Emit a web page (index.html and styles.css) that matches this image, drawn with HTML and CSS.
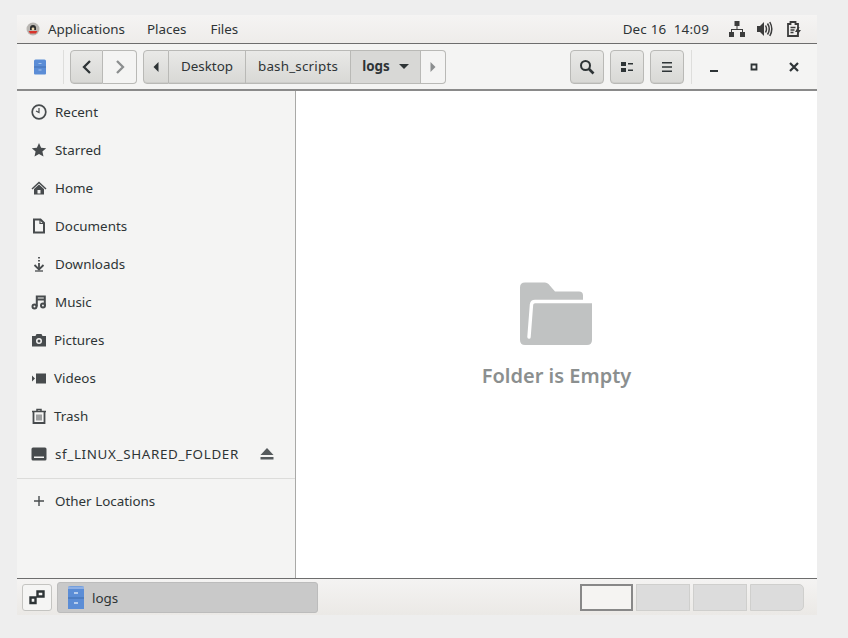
FILE: index.html
```html
<!DOCTYPE html>
<html lang="en">
<head>
    <meta charset="UTF-8">
    <title>logs</title>
    <link rel="stylesheet" href="styles.css">
</head>
<body>
<div class="desktop">
    <div class="top-panel">
        <svg class="distro" width="16" height="16" viewBox="0 0 16 16"><circle cx="8" cy="8" r="6.500" fill="#b9b6b2"/><path d="M5 7a3 3 0 0 1 6 0v2H5z" fill="#2e2e2e"/><path d="M3.500 10h9L11 12.500H5z" fill="#d8342c"/><circle cx="8" cy="8" r="1.400" fill="#f0d9b0"/></svg>
        <span class="menu menu-apps">Applications</span>
        <span class="menu menu-places">Places</span>
        <span class="menu">Files</span>
        <span class="clock">Dec 16&nbsp; 14:09</span>
        <svg class="tray tray-net" width="16" height="16" viewBox="0 0 16 16" fill="#3c3c3c"><path d="M5.500 0h5v5h-5zM0 11h5v5H0zM11 11h5v5h-5z"/><path d="M7.500 5h1v3H14v3h-1V9H3v2H2V8h5.500z"/></svg>
        <svg class="tray tray-vol" width="16" height="16" viewBox="0 0 16 16" fill="#3c3c3c"><path d="M0 5h3l4-4v14l-4-4H0z"/><path d="M8.500 4.500q2 3.500 0 7M10.500 2.500q3.500 5.500 0 11M12.800 1q4 7 0 14" fill="none" stroke="#3c3c3c" stroke-width="1.500"/></svg>
        <svg class="tray tray-bat" width="16" height="16" viewBox="0 0 16 16"><path d="M2 3h2.500V1h5v2H12v12H2z" fill="none" stroke="#3c3c3c" stroke-width="1.800"/><path d="M4.500 6.500h5M4.500 9h4M4.500 11.500h3" stroke="#3c3c3c" stroke-width="1.300"/><path d="M12 6l-3 5h2.500l-1 4 4.500-6h-2.500l1-3z" fill="#3c3c3c"/></svg>
    </div>

    <div class="toolbar">
        <svg class="cabinet-small" width="14" height="16" viewBox="0 0 14 16"><path d="M1 2q0-1.500 1.500-1.500h9Q13 .5 13 2v12.500q0 1-1 1H2q-1 0-1-1z" fill="#5b8dd6"/><path d="M1 8h12" stroke="#4571b3"/><path d="M5.500 4.500h3M5.500 11h3" stroke="#a9c4ec"/></svg>
        <div class="tool-sep"></div>
        <div class="btn-group nav-group">
            <div class="btn nav-btn"><svg width="12" height="16" viewBox="0 0 12 16"><path d="M9 2L3 8l6 6" fill="none" stroke="#2e3436" stroke-width="2.300"/></svg></div>
            <div class="btn nav-btn flat"><svg width="12" height="16" viewBox="0 0 12 16"><path d="M3 2l6 6-6 6" fill="none" stroke="#8b8e8f" stroke-width="2.300"/></svg></div>
        </div>
        <div class="btn-group path-group">
            <div class="btn path-arrow"><svg width="6" height="10" viewBox="0 0 6 10"><path d="M5.500 0v10L.5 5z" fill="#2e3436"/></svg></div>
            <div class="btn path-item path-desktop">Desktop</div>
            <div class="btn path-item path-bash">bash_scripts</div>
            <div class="btn path-item path-logs">logs<svg width="10" height="5" viewBox="0 0 10 5"><path d="M0 0h10L5 5z" fill="#2e3436"/></svg></div>
            <div class="btn flat path-next"><svg width="6" height="10" viewBox="0 0 6 10"><path d="M.5 0v10l5-5z" fill="#8b8e8f"/></svg></div>
        </div>
        <div class="btn tool-btn tool-search"><svg width="16" height="16" viewBox="0 0 16 16" fill="none" stroke="#2e3436" stroke-width="2"><circle cx="6.500" cy="6.500" r="4.500"/><path d="M10 10l4.500 4.500" stroke-width="2.600"/></svg></div>
        <div class="btn tool-btn"><svg width="14" height="14" viewBox="0 0 14 14" fill="#2e3436"><path d="M1 2h5v4H1zM1 8h5v4H1zM8 3h5v1.500H8zM8 9.500h5V11H8z"/></svg></div>
        <div class="btn tool-btn"><svg width="12" height="12" viewBox="0 0 12 12" fill="#2e3436"><path d="M1 1h10v1.500H1zM1 5.250h10v1.500H1zM1 9.500h10V11H1z"/></svg></div>
        <div class="tool-sep win-sep"></div>
        <div class="win-btn"><svg width="10" height="10" viewBox="0 0 10 10"><path d="M1 8h8v2H1z" fill="#2e3436"/></svg></div>
        <div class="win-btn"><svg width="10" height="10" viewBox="0 0 10 10"><path d="M2.500 2.500h5v5h-5z" fill="none" stroke="#2e3436" stroke-width="1.800"/></svg></div>
        <div class="win-btn"><svg width="10" height="10" viewBox="0 0 10 10"><path d="M1 1l8 8M9 1l-8 8" stroke="#2e3436" stroke-width="2.200"/></svg></div>
    </div>

    <div class="main">
        <div class="sidebar">
            <div class="row"><svg width="16" height="16" viewBox="0 0 16 16" fill="none" stroke="#474b4d"><circle cx="8" cy="8" r="6.800" stroke-width="1.700"/><path d="M8 4v4.500L5 7" stroke-width="1.200"/></svg><span>Recent</span></div>
            <div class="row"><svg width="16" height="16" viewBox="0 0 16 16" fill="#474b4d"><path d="M8 1l2.100 4.700 5.100.5-3.800 3.400 1.100 5L8 12l-4.500 2.600 1.100-5L.8 6.200l5.100-.5z"/></svg><span>Starred</span></div>
            <div class="row"><svg width="16" height="16" viewBox="0 0 16 16" fill="#474b4d"><path d="M8 1.500L.5 8.500l1 1L8 3.500l6.500 6 1-1z"/><path fill-rule="evenodd" d="M3 9l5-4.500L13 9v5.500H3zM6.500 10v3.500h3V10z"/></svg><span>Home</span></div>
            <div class="row"><svg width="16" height="16" viewBox="0 0 16 16"><path d="M3 1.500h6.500L13 5v9.500H3z" fill="none" stroke="#474b4d" stroke-width="2"/><path d="M9 1.500V5.500h4" fill="none" stroke="#474b4d" stroke-width="1.200"/></svg><span>Documents</span></div>
            <div class="row"><svg width="16" height="16" viewBox="0 0 16 16" fill="none" stroke="#474b4d" stroke-width="1.800"><path d="M8 1v1.500M8 4v1.500M8 7v5"/><path d="M3.500 9l4.500 4.500L12.500 9"/><path d="M4 15h8" stroke-width="1.300"/></svg><span>Downloads</span></div>
            <div class="row"><svg width="16" height="16" viewBox="0 0 16 16" fill="none" stroke="#474b4d" stroke-width="2"><circle cx="3.500" cy="12.500" r="2"/><circle cx="12" cy="11.500" r="2"/><path d="M5.800 12.500V2.500h8V11.500M6 5.500h8"/></svg><span>Music</span></div>
            <div class="row row-pictures"><svg width="16" height="16" viewBox="0 0 16 16" fill="#474b4d"><path fill-rule="evenodd" d="M1 4h3.500l1-2h5l1 2H15v10.500H1zM8 6a3 3 0 1 0 0 6 3 3 0 0 0 0-6z"/><circle cx="8" cy="9" r="1.500"/></svg><span>Pictures</span></div>
            <div class="row row-videos"><svg width="16" height="16" viewBox="0 0 16 16" fill="#474b4d"><path d="M5 3.500h10v10H5zM1 5.500l3 3-3 3z"/></svg><span>Videos</span></div>
            <div class="row row-videos"><svg width="16" height="16" viewBox="0 0 16 16"><path d="M1 3.500h14M6 3V1.500h4V3" fill="none" stroke="#474b4d" stroke-width="1.500"/><path d="M2.500 4v11h11V4" fill="none" stroke="#474b4d" stroke-width="1.800"/><path d="M6 6.500v6M8 6.500v6M10 6.500v6" stroke="#474b4d"/></svg><span>Trash</span></div>
            <div class="row"><svg width="16" height="16" viewBox="0 0 16 16" fill="#474b4d"><path fill-rule="evenodd" d="M2 1.500h12q1.500 0 1.500 1.500v10Q15.500 14.500 14 14.500H2Q.5 14.500 .5 13V3Q.5 1.500 2 1.500zM3 10.500V12h10v-1.500z"/></svg><span class="mount-name">sf_LINUX_SHARED_FOLDER</span><svg class="eject" width="14" height="12" viewBox="0 0 14 12" fill="#555a5c"><path d="M7 0l6.500 7H.5z"/><path d="M.5 9h13v2.500H.5z"/></svg></div>
            <div class="side-sep"></div>
            <div class="row row-other"><svg width="16" height="16" viewBox="0 0 16 16" fill="#474b4d"><path d="M7.300 3h1.400v4.300H13v1.400H8.700V13H7.300V8.700H3V7.300h4.300z"/></svg><span>Other Locations</span></div>
        </div>
        <div class="content">
            <svg width="74" height="64" viewBox="1 0 74 64"><path d="M1 5.500q0-5 5-5H26q2 0 3.500 1.500L36 9.500H60q4 0 4 4V21H73V58q0 5-5 5H6q-5 0-5-5z" fill="#c0c2c2"/><path d="M74 19.500H16q-3 0-3.500 3L10 55" fill="none" stroke="#ffffff" stroke-width="3.400" stroke-linecap="round"/></svg>
            <div class="empty-label">Folder is Empty</div>
        </div>
    </div>

    <div class="bottom-panel">
        <div class="show-desktop"><svg width="16" height="16" viewBox="0 0 16 16" fill="none" stroke="#2e3436" stroke-width="2.400"><path d="M8.500 2.500h6v5h-6zM1.500 8.500h5v5.500h-5z" /></svg></div>
        <div class="task">
            <svg width="16" height="23" viewBox="0 0 16 23"><path d="M0 2q0-2 3-2h10q3 0 3 2v21H0z" fill="#5b8dd6"/><path d="M0 0.500h16V3H0z" fill="#8fb0e4"/><path d="M0 12h16" stroke="#3f6cae"/><path d="M6 7h4M6 17h4" stroke="#d5e2f6" stroke-width="1.500"/></svg>
            <span class="task-name">logs</span>
        </div>
        <div class="workspaces">
            <div class="ws active"></div>
            <div class="ws"></div>
            <div class="ws"></div>
            <div class="ws last"></div>
        </div>
    </div>
</div>
</body>
</html>
```

FILE: styles.css
```css
html, body {
    margin: 0;
    padding: 0;
    background-color: #eeeeee;
}
.desktop {
    width: 800px;
    height: 600px;
    margin: 15px 0 0 17px;
    display: flex;
    flex-direction: column;
    font-family: "Noto Sans", "Open Sans", sans-serif;
    font-size: 13.4px;
    color: #2e3436;
}
svg {
    flex-shrink: 0;
    display: block;
}

/* top panel */
.top-panel {
    height: 28px;
    display: flex;
    align-items: center;
    padding-left: 8px;
    background: linear-gradient(#f5f4f3, #eeecea);
    border-bottom: 1px solid #6d6d6d;
    color: #2e3436;
}
.distro {
    margin-right: 7px;
}
.menu-apps {
    margin-right: 22px;
}
.menu-places {
    margin-right: 24px;
}
.clock {
    margin-left: auto;
    margin-right: 20px;
    letter-spacing: .2px;
}
.tray {
    margin-right: 12px;
}
.tray-vol {
    margin-right: 13px;
}
.tray-bat {
    margin-right: 15px;
}

/* toolbar */
.toolbar {
    height: 45px;
    flex-shrink: 0;
    display: flex;
    align-items: center;
    background-color: #f4f4f3;
    border-bottom: 2px solid #8a8a8a;
    box-sizing: content-box;
}
.cabinet-small {
    margin-left: 16px;
    margin-right: 16px;
}
.tool-sep {
    width: 1px;
    height: 34px;
    background-color: #dededc;
}
.btn-group {
    display: flex;
    height: 34px;
    box-sizing: border-box;
}
.btn {
    height: 34px;
    box-sizing: border-box;
    display: flex;
    align-items: center;
    justify-content: center;
    border: 1px solid #b9b9b6;
    border-left-width: 0;
    background: linear-gradient(#e9e9e7, #d8d8d5);
    box-shadow: inset 0 -1px 0 #cdcdca;
}
.btn.flat {
    background: #f4f4f3;
    box-shadow: none;
}
.nav-group {
    margin-left: 6px;
}
.nav-btn {
    width: 33px;
}
.nav-btn:first-child, .path-arrow {
    border-left-width: 1px;
    border-radius: 4px 0 0 4px;
}
.nav-btn:last-child, .path-next {
    border-radius: 0 4px 4px 0;
    width: 34px;
}
.path-group {
    margin-left: 6px;
}
.path-arrow {
    width: 26px;
}
.path-item {
    padding-bottom: 2px;
}
.path-desktop {
    width: 77px;
}
.path-bash {
    width: 105px;
    letter-spacing: .2px;
}
.path-logs {
    width: 70px;
    gap: 9px;
    font-weight: 700;
    background: #d8d8d6;
    box-shadow: none;
}
.path-logs svg {
    margin-top: 2px;
}
.path-group .path-next {
    width: 25px;
}
.tool-btn {
    width: 34px;
    margin-left: 6px;
    border-left-width: 1px;
    border-radius: 4px;
}
.tool-search {
    margin-left: 124px;
}
.win-sep {
    margin-left: 7px;
}
.win-btn {
    width: 40px;
    height: 34px;
    display: flex;
    align-items: center;
    justify-content: center;
}
.win-sep + .win-btn {
    margin-left: 2px;
}

/* sidebar */
.main {
    flex: 1;
    min-height: 0;
    display: flex;
    border-bottom: 1px solid #6d6d6d;
}
.sidebar {
    width: 278px;
    background-color: #f4f4f3;
    border-right: 1px solid #a9a9a7;
    padding-top: 2px;
    flex-shrink: 0;
}
.row {
    height: 38px;
    display: flex;
    align-items: center;
    padding-left: 14px;
    gap: 8px;
}
.row-pictures, .row-videos {
    gap: 7px;
}
.mount-name {
    letter-spacing: .65px;
}
.eject {
    margin-left: auto;
    margin-right: 21px;
}
.side-sep {
    height: 1px;
    background-color: #dcdcda;
    margin-top: 5px;
}
.row-other {
    height: 44px;
}

/* empty folder */
.content {
    flex: 1;
    background-color: #ffffff;
    display: flex;
    flex-direction: column;
    align-items: center;
    padding-top: 191px;
}
.empty-label {
    margin-top: 16px;
    font-size: 20px;
    line-height: 28px;
    font-weight: 600;
    color: #8b8f8f;
}

/* bottom panel */
.bottom-panel {
    height: 36px;
    flex-shrink: 0;
    display: flex;
    align-items: center;
    padding-left: 5px;
    background: linear-gradient(#f4f3f2, #ebe9e6);
}
.show-desktop {
    width: 30px;
    height: 27px;
    box-sizing: border-box;
    display: flex;
    align-items: center;
    justify-content: center;
    border: 1px solid #c4c4c1;
    border-radius: 3px;
    background-color: #f5f5f4;
}
.task {
    width: 261px;
    height: 31px;
    box-sizing: border-box;
    margin-left: 5px;
    display: flex;
    align-items: center;
    gap: 8px;
    padding-left: 10px;
    background-color: #c9c9c9;
    border: 1px solid #bcbcbc;
    border-radius: 3px;
}
.task-name {
    padding-top: 1px;
}
.workspaces {
    margin-left: 262px;
    display: flex;
    gap: 3px;
}
.ws {
    width: 54px;
    height: 27px;
    box-sizing: border-box;
    background-color: #dcdcdc;
    border: 1px solid #cfcfcd;
}
.ws.active {
    width: 53px;
    background-color: #f5f4f2;
    border: 2px solid #888888;
}
.ws.last {
    border-radius: 0 5px 5px 0;
}
```
